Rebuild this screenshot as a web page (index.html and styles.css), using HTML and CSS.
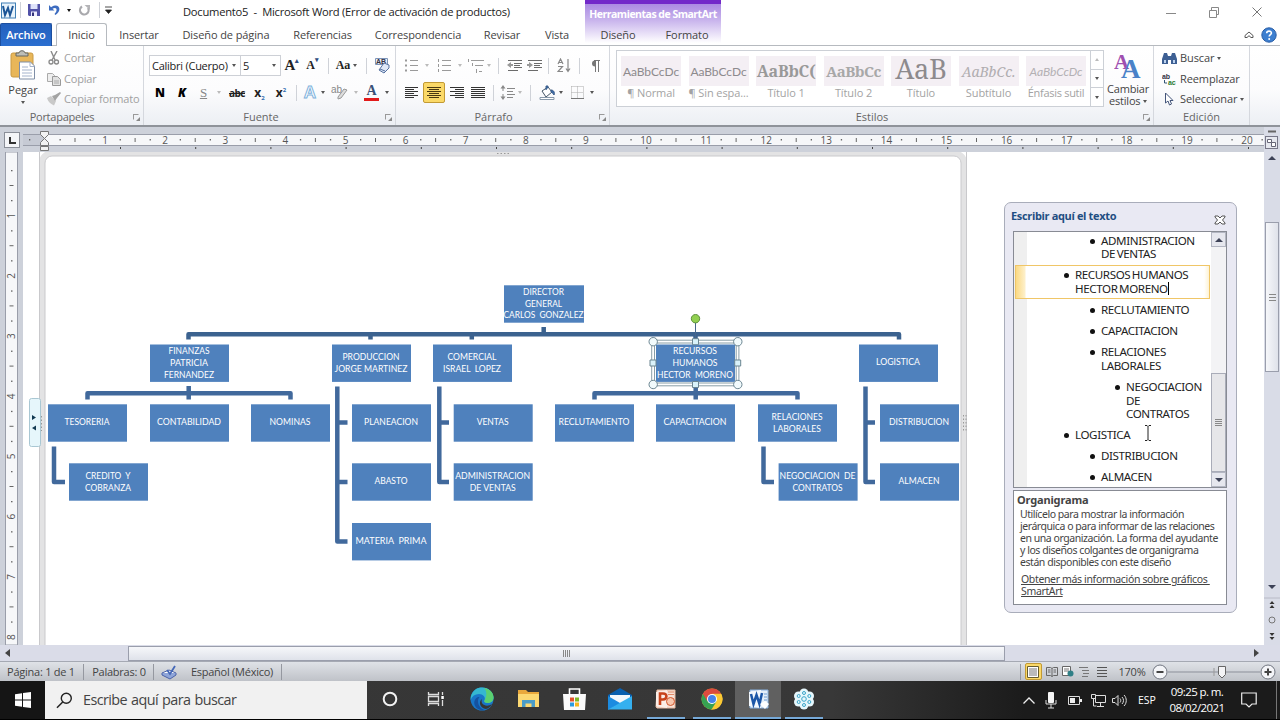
FILE: index.html
```html
<!DOCTYPE html>
<html lang="es">
  <head>
    <meta charset="UTF-8" />
    <meta name="viewport" content="width=device-width, initial-scale=1.0" />
    <title>Documento5 - Microsoft Word</title>
    <link rel="stylesheet" href="styles.css">
  </head>
  <body>
    <header class="titlebar">
      <div class="quick">
        <svg width="17" height="17" viewBox="0 0 17 17"><rect x="1.5" y="1" width="14" height="15" fill="#e8f3fb" stroke="#3f7fb5"/><path d="M3 4l2 9 3-7 2 7 3-9" fill="none" stroke="#1c5596" stroke-width="2"/></svg>
        <i class="sep"></i>
        <svg width="14" height="14" viewBox="0 0 14 14"><path d="M1 1h12v12H2l-1-1z" fill="#5152a8"/><path d="M3.500 1h7v5h-7z" fill="#dfe3fa"/><path d="M4 8.500h6V13H4z" fill="#eef"/><path d="M5 9.500h2V13H5z" fill="#33337a"/></svg>
        <svg width="13" height="12" viewBox="0 0 13 12"><path d="M1 1v5.500h5.500L4.500 4.800C8 2.500 9.500 5 8 8L6.500 10l1 1C13.500 7 12 1 7 1.500c-2 .2-3 1-4 1.800z" fill="#3d6cc0"/></svg>
        <i class="caret"></i>
        <svg width="13" height="13" viewBox="0 0 13 13"><path d="M4 2.500A4.300 4.300 0 1 0 10 4" fill="none" stroke="#a9a9ad" stroke-width="2.200"/><path d="M6.500 1H12v5z" fill="#b5b5b8"/></svg>
        <i class="sep"></i>
        <svg width="7" height="8" viewBox="0 0 7 8"><path d="M0 1h7M.5 4h6L3.500 7.500z" fill="#222" stroke="#222" stroke-width=".8"/></svg>
      </div>
      <div class="caption">Documento5&nbsp; -&nbsp; Microsoft Word (Error de activación de productos)</div>
      <div class="context-title">Herramientas de SmartArt</div>
      <div class="window-buttons">
        <svg width="10" height="12" viewBox="0 0 10 12"><path d="M0 6.500h10" stroke="#888"/></svg>
        <svg width="10" height="11" viewBox="0 0 10 11"><path d="M.5 3.500h7v7h-7zM2.500 3V.5h7v7H8" fill="none" stroke="#888"/></svg>
        <svg width="10" height="10" viewBox="0 0 10 10"><path d="M.5.5l9 9M9.500.5l-9 9" stroke="#777"/></svg>
      </div>
    </header>

    <nav class="tabs">
      <a class="tab file">Archivo</a>
      <a class="tab active">Inicio</a>
      <a class="tab">Insertar</a>
      <a class="tab">Diseño de página</a>
      <a class="tab">Referencias</a>
      <a class="tab">Correspondencia</a>
      <a class="tab">Revisar</a>
      <a class="tab">Vista</a>
      <a class="tab">Diseño</a>
      <a class="tab">Formato</a>
      <div class="help">
        <svg width="10" height="8" viewBox="0 0 10 8"><path d="M1 4.500L5 1l4 3.500v2H7L5 4.700 3 6.500H1z" fill="#fff" stroke="#555"/></svg>
        <svg width="16" height="16" viewBox="0 0 16 16"><circle cx="8" cy="8" r="7.200" fill="#3d7fd0" stroke="#2a5ea6"/><path d="M5.700 6.300c0-3 4.800-2.800 4.700-.2C10.300 7.700 8.200 7.600 8.200 9.600" fill="none" stroke="#fff" stroke-width="1.600"/><circle cx="8.200" cy="12" r="1" fill="#fff"/></svg>
      </div>
    </nav>

    <div class="ribbon">
      <section class="group clipboard">
        <div class="group-body">
          <div class="paste">
            <svg width="26" height="30" viewBox="0 0 26 30"><rect x="1" y="3" width="22" height="24" rx="2" fill="#e8b659" stroke="#c99a45"/><path d="M6 6V3h3c0-3 6-3 6 0h3v3z" fill="#bdbdb6" stroke="#66665f"/><path d="M9.500 12h11l4 4v13h-15z" fill="#fff" stroke="#7f8ea6"/><path d="M20 12v4.500h4.500M12 17h6M12 20h10M12 23h10M12 26h10" fill="none" stroke="#a4b3cc"/></svg>
            <span>Pegar</span>
            <i class="caret"></i>
          </div>
          <ul class="side-list off">
            <li><svg width="16" height="14" viewBox="0 0 16 14"><path d="M5 0l4 9M11 0L6 9" stroke="#8a8a8a" stroke-width="1.400"/><circle cx="5" cy="11" r="2" fill="none" stroke="#888" stroke-width="1.300"/><circle cx="10.500" cy="11" r="2" fill="none" stroke="#888" stroke-width="1.300"/></svg>Cortar</li>
            <li><svg width="16" height="14" viewBox="0 0 16 14"><path d="M1.500 1.500h5l2 2v6h-7z" fill="#eee" stroke="#aaa"/><path d="M6.500 4.500h5l3 3v6h-8z" fill="#e2e2e2" stroke="#999"/><path d="M8 9h5M8 11h5" stroke="#aaa"/></svg>Copiar</li>
            <li><svg width="16" height="14" viewBox="0 0 16 14"><path d="M1 6l4-2 5 5-2 4.500C5 12 2 10 1 6z" fill="#c9c9c9"/><path d="M6 4l3-1 5-3 1 1-4 5-2 3z" fill="#a3a3a3"/></svg>Copiar formato</li>
          </ul>
        </div>
        <footer>Portapapeles<i class="launch"></i></footer>
      </section>

      <section class="group font">
        <div class="group-body stacked">
          <div class="font-row-a">
            <div class="select">Calibri (Cuerpo)<i class="caret"></i></div>
            <div class="select">5<i class="caret"></i></div>
            <span class="glyph serif big">A<sup>▴</sup></span>
            <span class="glyph serif small">A<sup>▾</sup></span>
            <i class="sep"></i>
            <span class="glyph serif">Aa</span><i class="caret"></i>
            <i class="sep"></i>
            <svg width="17" height="17" viewBox="0 0 17 17"><path d="M1.500 1.500h12v6h-12z" fill="#e8eef8" stroke="#7e94b8"/><text x="2" y="7" class="svg-ab">AB</text><path d="M5 13l5-7 5 2v3l-5 5z" fill="#dfe8f7" stroke="#54709f"/><path d="M6 12l5 2" stroke="#54709f"/></svg>
          </div>
          <div class="font-row-b">
            <b class="glyph heavy">N</b>
            <b class="glyph heavy slant">K</b>
            <span class="glyph serif under">S</span><i class="caret pale"></i>
            <span class="glyph strike">abc</span>
            <b class="glyph script">x<sub>2</sub></b>
            <b class="glyph script">x<sup>2</sup></b>
            <i class="sep"></i>
            <span class="glyph outline">A</span><i class="caret"></i>
            <svg width="17" height="16" viewBox="0 0 17 16"><text x="0" y="8" class="svg-hl">ab</text><path d="M7 12l6-8 3 1-6 8-3 1z" fill="#ddd" stroke="#999"/></svg><i class="caret pale"></i>
            <span class="glyph fontcolor">A</span><i class="caret"></i>
          </div>
        </div>
        <footer>Fuente<i class="launch"></i></footer>
      </section>

      <section class="group paragraph">
        <div class="group-body stacked">
          <div class="par-row-a">
            <svg width="14" height="13" viewBox="0 0 14 13"><path d="M0 1.500h2M0 6.500h2M0 11.500h2" stroke="#999" stroke-width="2"/><path d="M5 1.500h8M5 6.500h8M5 11.500h8" stroke="#9a9a9a"/></svg><i class="caret pale"></i>
            <svg width="14" height="13" viewBox="0 0 14 13"><path d="M1.500 0v3M1.500 5v3M1.500 10v3" stroke="#999"/><path d="M5 1.500h9M5 6.500h9M5 11.500h9" stroke="#9a9a9a"/></svg><i class="caret pale"></i>
            <svg width="17" height="14" viewBox="0 0 17 14"><path d="M1.500 0v3M5.500 4v3M9.500 10v4" stroke="#999"/><path d="M4 1.500h13M8 6.500h8M12 12.500h3" stroke="#9a9a9a"/></svg><i class="caret pale"></i>
            <i class="sep"></i>
            <svg width="15" height="13" viewBox="0 0 15 13"><path d="M1 1.500h14M7 4.500h8M7 6.500h6M7 8.500h8M1 11.500h10" stroke="#6b6b6b"/><path d="M0 6l4-3v2h2v2H4v2z" fill="#999"/></svg>
            <svg width="15" height="13" viewBox="0 0 15 13"><path d="M1 1.500h14M7 4.500h8M7 6.500h6M7 8.500h8M1 11.500h10" stroke="#6b6b6b"/><path d="M6 6L2 3v2H0v2h2v2z" fill="#999"/></svg>
            <i class="sep"></i>
            <svg width="14" height="15" viewBox="0 0 14 15"><path d="M1 6l2.500-5L6 6M2 4.500h3M1 8.500h4.500L1 13.500h5M11 1v12M9 10.500l2 3 2-3" fill="none" stroke="#888" stroke-width="1.200"/></svg>
            <i class="sep"></i>
            <svg width="10" height="12" viewBox="0 0 10 12"><path d="M5 .5a3 3 0 0 0 0 6z" fill="#777"/><path d="M4 .5h6M5.500 0v12M8.500 0v12" stroke="#777"/></svg>
          </div>
          <div class="par-row-b">
            <svg width="14" height="12" viewBox="0 0 14 12"><path d="M0 .5h13M0 2.500h9M0 4.500h13M0 6.500h9M0 8.500h13M0 10.500h9" stroke="#333"/></svg>
            <span class="pressed"><svg width="14" height="12" viewBox="0 0 14 12"><path d="M0 .5h14M2 2.500h10M0 4.500h14M2 6.500h10M0 8.500h14M2 10.500h10" stroke="#4b3a10"/></svg></span>
            <svg width="14" height="12" viewBox="0 0 14 12"><path d="M0 .5h14M5 2.500h9M0 4.500h14M5 6.500h9M0 8.500h14M5 10.500h9" stroke="#333"/></svg>
            <svg width="14" height="12" viewBox="0 0 14 12"><path d="M0 .5h14M0 2.500h14M0 4.500h14M0 6.500h14M0 8.500h14M0 10.500h14" stroke="#333"/></svg>
            <i class="sep"></i>
            <svg width="15" height="15" viewBox="0 0 15 15"><path d="M3 0l2.500 3.500h-5zM3 15l2.500-3.500h-5z" fill="#888"/><path d="M3 3v3M3 9v3M7 3.500h8M7 6.500h6M7 9.500h8M7 12.500h6" stroke="#888"/></svg><i class="caret pale"></i>
            <i class="sep"></i>
            <svg width="17" height="15" viewBox="0 0 17 15"><path d="M3 6l6-4 4 5-6 5z" fill="#fff" stroke="#456"/><path d="M7 5V1h2v2M12 5c3 0 4 3 3 5-1-2-2-2-3-3z" fill="#3b6ca8" stroke="#3b5c8a"/><path d="M1 12.500h14v2H1z" fill="#fff" stroke="#89a"/></svg><i class="caret"></i>
            <svg width="13" height="13" viewBox="0 0 13 13"><path d="M.5.500h12v12M.500.500v12M6.500.500v12M.500 6.500h12" fill="none" stroke="#aaa" stroke-dasharray="1 1"/><path d="M0 12.500h13" stroke="#777"/></svg><i class="caret"></i>
          </div>
        </div>
        <footer>Párrafo<i class="launch"></i></footer>
      </section>

      <section class="group styles">
        <div class="group-body">
          <div class="gallery">
            <div class="style"><span class="sample">AaBbCcDc</span>¶ Normal</div>
            <div class="style"><span class="sample">AaBbCcDc</span>¶ Sin espa...</div>
            <div class="style"><span class="sample h1">AaBbC(</span>Título 1</div>
            <div class="style"><span class="sample h2">AaBbCc</span>Título 2</div>
            <div class="style"><span class="sample title">AaB</span>Título</div>
            <div class="style"><span class="sample subtitle">AaBbCc.</span>Subtítulo</div>
            <div class="style"><span class="sample subtle">AaBbCcDc</span>Énfasis sutil</div>
            <div class="gallery-nav">
              <span><i class="caret up pale"></i></span>
              <span><i class="caret"></i></span>
              <span><i class="caret more"></i></span>
            </div>
          </div>
          <div class="change">
            <svg width="28" height="28" viewBox="0 0 28 28"><text x="0" y="18" class="svg-a1">A</text><text x="7" y="27" class="svg-a2">A</text></svg>
            <span>Cambiar<br>estilos <i class="caret"></i></span>
          </div>
        </div>
        <footer>Estilos<i class="launch"></i></footer>
      </section>

      <section class="group editing">
        <div class="group-body">
          <ul class="side-list">
            <li><svg width="15" height="13" viewBox="0 0 15 13"><path d="M2 1h3l1 3h3l1-3h3l2 6v5H9V8H6v4H0V7z" fill="#3d5f93"/><path d="M2 8h2v3H2zM11 8h2v3h-2z" fill="#bcd2ee"/></svg>Buscar <i class="caret"></i></li>
            <li><svg width="15" height="14" viewBox="0 0 15 14"><text x="0" y="7" class="svg-ab">ab</text><text x="6" y="13" class="svg-ab green">ac</text><path d="M2.500 8v3H5" fill="none" stroke="#357"/></svg>Reemplazar</li>
            <li><svg width="15" height="14" viewBox="0 0 15 14"><path d="M3.500 1v10l2.500-2 1.500 4 2-1-1.500-3.500H11z" fill="#fff" stroke="#44557a"/></svg>Seleccionar <i class="caret"></i></li>
          </ul>
        </div>
        <footer>Edición</footer>
      </section>
    </div>

    <main class="editor">
      <div class="sheet">
        <div class="ruler-top">
          <div class="tab-kind"><svg width="7" height="7" viewBox="0 0 7 7"><path d="M1 0v6h6" fill="none" stroke="#333" stroke-width="2"/></svg></div>
          <svg id="hruler" width="1241" height="25" viewBox="23 127 1241 25"></svg>
        </div>
        <div class="workspace">
          <svg id="vruler" width="23" height="493" viewBox="0 152 23 493"></svg>
          <svg id="chart" width="1241" height="493" viewBox="23 152 1241 493">
            <rect x="42" y="153.500" width="922" height="520" rx="9" fill="none" stroke="#e3e3e4" stroke-width="6"/>
            <path d="M39.500 152v493M966.500 152v493" stroke="#c9c9cc"/>
            <rect x="45" y="156" width="916" height="515" rx="7" fill="#fff" stroke="#c9c9cc"/>
            <path d="M497 153.500h13M963.500 415v16M966 415v16M41.500 416v15" stroke="#999" stroke-width="1" stroke-dasharray="1.500 2"/>
            <rect x="29.500" y="398.500" width="11" height="48" rx="2" fill="#e6f6fb" stroke="#a9c7d3"/>
            <path d="M32 415l4 2.500-4 2.500zM36 425.500l-4 2.500 4 2.500z" fill="#123a52"/>
            <g id="links" fill="none" stroke="#41699c" stroke-width="4.500" stroke-linejoin="round">
              <path d="M188.500 339.500V334.200H899V339.500M543.700 327v7M370.500 334v5.500M471.800 334v5.500M695.500 334v8" stroke="#3b628f"/>
              <path d="M87.500 399.500V393.200H290.500V399.500M188.700 386v13.500M594.500 399.500V393.200H797.500V399.500M695.700 386v13.500"/>
              <path d="M337.300 386.500V541.500H347.500M337.300 422.500h10.200M337.300 482h10.200M439.300 386.500V482H449M439.300 422.500H449"/>
              <path d="M865.500 386.500V482H875M865.500 422.500H875M54 446.500V482H65M763.500 446.500V482H774"/>
            </g>
            <g id="nodes"></g>
            <g fill="#f2fbfd" stroke="#6b8591">
              <path d="M653.200 341.600h84.400v43H653.200z" fill="none" stroke="#fff" stroke-width="2.500"/>
              <path d="M651.700 340.200h87.200v45.600h-87.200zM654.500 343h81.700v40h-81.700z" fill="none" stroke-width=".8"/>
              <path d="M695.500 323v18" stroke="#47658a"/>
              <circle cx="695.500" cy="318.700" r="4.200" fill="#92d050" stroke="#5d8f3c"/>
              <circle cx="653.200" cy="341.700" r="4.200"/><circle cx="737.800" cy="341.700" r="4.200"/>
              <circle cx="653.200" cy="384.500" r="4.200"/><circle cx="737.800" cy="384.500" r="4.200"/>
              <path d="M692.500 338.700h6v6h-6zM692.500 381.500h6v6h-6zM650 360h6v6h-6zM734.700 360h6v6h-6z" fill="#d9f2fa"/>
            </g>
          </svg>

          <aside class="pane">
            <h2>Escribir aquí el texto
              <svg width="12" height="10" viewBox="0 0 12 10"><path d="M1 1h3l2 2 2-2h3v1L8.500 5 11 8v1H8L6 7 4 9H1V8l2.500-3L1 2z" fill="#fff" stroke="#555"/></svg>
            </h2>
            <div class="outline-box">
              <ul class="outline-list">
                <li class="l2">ADMINISTRACION<br>DE VENTAS</li>
                <li class="l1 current">RECURSOS HUMANOS<br>HECTOR MORENO<i class="cursor"></i></li>
                <li class="l2">RECLUTAMIENTO</li>
                <li class="l2">CAPACITACION</li>
                <li class="l2">RELACIONES<br>LABORALES</li>
                <li class="l3">NEGOCIACION<br>DE<br>CONTRATOS</li>
                <li class="l1">LOGISTICA</li>
                <li class="l2">DISTRIBUCION</li>
                <li class="l2">ALMACEN</li>
              </ul>
              <div class="pane-scroll">
                <span class="btn"><i class="caret up big"></i></span>
                <span class="thumb"></span>
                <span class="btn"><i class="caret big"></i></span>
              </div>
            </div>
            <div class="about">
              <h3>Organigrama</h3>
              <p>Utilícelo para mostrar la información<br>jerárquica o para informar de las relaciones<br>en una organización. La forma del ayudante<br>y los diseños colgantes de organigrama<br>están disponibles con este diseño</p>
              <a>Obtener más información sobre gráficos&nbsp;<br>SmartArt</a>
            </div>
            <svg class="ibeam" width="8" height="16" viewBox="0 0 8 16"><path d="M1 .5h2l1 1 1-1h2M4 1.500v13M1 15.500h2l1-1 1 1h2" fill="none" stroke="#222"/></svg>
          </aside>
        </div>
      </div>
      <div class="vscroll">
        <svg width="16" height="24" viewBox="0 0 16 24"><path d="M4 4.500h8" stroke="#666" stroke-width="2"/><rect x="1.500" y="9.500" width="12" height="12" fill="#e6e8ef" stroke="#778"/><path d="M3.500 12.500h4v3h-4zM7.500 15.500h4v4h-4z" fill="#fff" stroke="#667"/></svg>
        <i class="caret up big"></i>
        <div class="thumb"></div>
        <i class="caret big"></i>
        <svg width="16" height="48" viewBox="0 0 16 48"><path d="M0 1h16" stroke="#b8bac6"/><path d="M8 4l2.500 3h-5zM8 8l2.500 3h-5zM5.500 36h5L8 39zM5.500 40h5L8 43z" fill="#333"/><circle cx="8" cy="23" r="3" fill="none" stroke="#777"/></svg>
      </div>
    </main>

    <div class="hscroll">
      <i class="arrow left"></i>
      <div class="thumb"></div>
      <i class="arrow right"></i>
    </div>

    <div class="status">
      <span>Página: 1 de 1</span><i class="sep"></i>
      <span>Palabras: 0</span><i class="sep"></i>
      <svg width="18" height="16" viewBox="0 0 18 16"><path d="M2 9l7-3 7 3-6 5z" fill="#fff" stroke="#4a62a8"/><path d="M2 9v2l8 4 6-4V9" fill="#8fa5d8" stroke="#4a62a8"/><path d="M7 6l3 4 5-8" fill="none" stroke="#4467b8" stroke-width="1.800"/></svg>
      <span>Español (México)</span><i class="sep"></i>
      <div class="views">
        <i class="sep"></i>
        <span class="pressed"><svg width="12" height="12" viewBox="0 0 12 12"><path d="M.5.500h11v11H.500z" fill="#fff" stroke="#665c30"/><path d="M2 3h8M2 5h8M2 7h8M2 9h8" stroke="#777"/></svg></span>
        <svg width="12" height="11" viewBox="0 0 12 11"><path d="M.5 1.500h4l1.500 1 1.500-1h4v8h-4L6 10.500l-1.500-1h-4zM6 2.500v8M2 4h2.500M2 6h2.500M7.500 4H10M7.500 6H10" fill="none" stroke="#666"/></svg>
        <svg width="12" height="11" viewBox="0 0 12 11"><path d="M.5.500h8v9h-8z" fill="#fff" stroke="#666"/><path d="M2 3h5M2 5h5" stroke="#777"/><circle cx="8.500" cy="7.500" r="3" fill="#2f7f86"/></svg>
        <svg width="11" height="11" viewBox="0 0 11 11"><path d="M0 1.500h9M3 4.500h7M4 7.500h6M3 10.500h6" stroke="#777"/></svg>
        <svg width="10" height="11" viewBox="0 0 10 11"><path d="M0 1.500h10M0 4.500h10M0 7.500h10M0 10.500h10" stroke="#555"/></svg>
        <span>170%</span>
        <svg width="16" height="16" viewBox="0 0 16 16"><circle cx="8" cy="8" r="7" fill="#f4f5f8" stroke="#707580"/><path d="M4.500 8h7" stroke="#444" stroke-width="2"/></svg>
        <svg width="92" height="16" viewBox="0 0 92 16"><path d="M0 8h92" stroke="#8b8f99"/><path d="M46 4v8" stroke="#999"/><path d="M50.500 2.500h7v8L54 14l-3.500-3.500z" fill="#f4f4f6" stroke="#666"/></svg>
        <svg width="16" height="16" viewBox="0 0 16 16"><circle cx="8" cy="8" r="7" fill="#f4f5f8" stroke="#707580"/><path d="M4.500 8h7M8 4.500v7" stroke="#444" stroke-width="2"/></svg>
      </div>
    </div>

    <div class="taskbar">
      <div class="start"><svg width="16" height="16" viewBox="0 0 16 16"><path d="M0 2.300l7-1v6.300H0zM8 1.100L16 0v7.600H8zM0 8.500h7v6.200l-7-1zM8 8.500h8V16l-8-1.100z" fill="#fff"/></svg></div>
      <div class="search"><svg width="17" height="17" viewBox="0 0 17 17"><circle cx="10.300" cy="6.300" r="5" fill="none" stroke="#222" stroke-width="1.400"/><path d="M6.700 10L1 15.800" stroke="#222" stroke-width="1.500"/></svg>Escribe aquí para buscar</div>
      <div class="apps">
        <span><svg width="16" height="16" viewBox="0 0 16 16"><circle cx="8" cy="8" r="6.300" fill="none" stroke="#f2f2f2" stroke-width="2"/></svg></span>
        <span><svg width="18" height="16" viewBox="0 0 18 16"><path d="M1.500 1v2.500h10V1M1.500 15v-2.500h10V15M1.500 5.500h10v5h-10zM15.500 1v3M15.500 9v6" fill="none" stroke="#ddd" stroke-width="1.300"/><path d="M14.300 5h2.500v3h-2.500z" fill="#fff"/></svg></span>
        <span><svg width="24" height="24" viewBox="0 0 24 24"><circle cx="12" cy="12" r="11.500" fill="#1976c8"/><path d="M1 9C3 3 7 .5 12 .5c7 0 11.500 5 11.500 10 0 4-3 5.500-6 5.500-2 0-4-1-3-2.500C16 10 13 7 9 7 5 7 2 9 .5 13z" fill="#35b8d0"/><path d="M14 1c6 .8 9.500 5 9.500 9.500 0 4-3 5.500-6 5.500-2 0-4-1-3-2.500C17 9 17 4 14 1z" fill="#5bd070"/><path d="M9.500 10C6 14 9 22 15 23c-7 1.500-12-4-10.500-9 1-3 3-4.500 5-4z" fill="#1552a0"/><path d="M12 12c-2 5 4 9 10 5-1.500 3-4 4.500-6 5-6-1-8-7-4-10z" fill="#363636"/></svg></span>
        <span><svg width="21" height="18" viewBox="0 0 21 18"><path d="M0 0h8l2 2h11v15H0z" fill="#e9a83c"/><path d="M0 4h21v13H0z" fill="#fcd872"/><path d="M4 10h13v7h-3.500v-3.500h-6V17H4z" fill="#4a9cc8"/></svg></span>
        <span><svg width="23" height="24" viewBox="0 0 23 24"><path d="M6.500 7V2h10v5" fill="none" stroke="#fff" stroke-width="1.600"/><path d="M0 7h23l-1 16H1z" fill="#fafafa"/><path d="M7 10.500h4v4H7z" fill="#e4532c"/><path d="M12 10.500h4v4h-4z" fill="#80b928"/><path d="M7 15.500h4v4H7z" fill="#2b9be0"/><path d="M12 15.500h4v4h-4z" fill="#f6b71f"/></svg></span>
        <span><svg width="24" height="22" viewBox="0 0 24 22"><path d="M0 7l12-7 12 7v14H0z" fill="#0a5fae"/><path d="M2 7h20v8H2z" fill="#f3f7fb"/><path d="M0 8l12 7-12 7z" fill="#1b8be0"/><path d="M24 8L0 21.500h24z" fill="#35b0ef"/></svg></span>
        <span class="open"><svg width="22" height="21" viewBox="0 0 22 21"><path d="M2 1h18v18H2L1 18z" fill="#f6e2d8" stroke="#e8b9a0"/><path d="M1 3l11-2v18L1 17z" fill="#fbeee7"/><path d="M5 16V4.500h3c5 0 4 6 0 6H5" fill="none" stroke="#c8431b" stroke-width="2.600"/><circle cx="15.500" cy="12.500" r="4" fill="#f8c7ae" stroke="#d1572d"/><path d="M13 3h6M13 5.500h6" stroke="#e38a66"/></svg></span>
        <span class="open"><svg width="22" height="22" viewBox="0 0 22 22"><circle cx="11" cy="11" r="10.500" fill="#e8bb2d"/><path d="M11 11L11 5.800H20.100A10.500 10.500 0 0 1 10 21.500z" fill="#fbc934"/><path d="M11 11L1.900 5.800A10.500 10.500 0 0 0 10.500 21.500L15.500 13.600z" fill="#36a152"/><path d="M1.900 5.800A10.500 10.500 0 0 1 20.100 5.800H11L6.500 13.600z" fill="#dc4b3e"/><circle cx="11" cy="11" r="5" fill="#fff"/><circle cx="11" cy="11" r="4" fill="#4683ea"/></svg></span>
        <span class="open front"><svg width="21" height="21" viewBox="0 0 21 21"><path d="M2 1h18v18H2z" fill="#e4effa" stroke="#86aedb"/><path d="M1 3l12-2v18L1 17z" fill="#f3f8fd"/><path d="M3 5l2.500 10L8.500 6l3 9L14 4" fill="none" stroke="#1c57a8" stroke-width="2.500"/><path d="M16 5h3M16 8h3M16 11h3" stroke="#6b9bd2"/><path d="M12 15l5-3 4 3-4 5z" fill="#fff"/></svg></span>
        <span class="open"><svg width="22" height="22" viewBox="0 0 22 22"><g fill="#e7f7fc"><circle cx="11" cy="11" r="6"/><circle cx="11" cy="5" r="4.500"/><circle cx="16.500" cy="8" r="4.500"/><circle cx="16.500" cy="14" r="4.500"/><circle cx="11" cy="17" r="4.500"/><circle cx="5.500" cy="14" r="4.500"/><circle cx="5.500" cy="8" r="4.500"/></g><g fill="none" stroke="#3aa5c9"><circle cx="11" cy="11" r="2.300"/><circle cx="11" cy="5" r="1.500"/><circle cx="16.300" cy="8" r="1.500"/><circle cx="16.300" cy="14" r="1.500"/><circle cx="11" cy="17" r="1.500"/><circle cx="5.700" cy="14" r="1.500"/><circle cx="5.700" cy="8" r="1.500"/></g></svg></span>
      </div>
      <div class="tray">
        <svg width="12" height="7" viewBox="0 0 12 7"><path d="M.5 6.500L6 1l5.500 5.500" fill="none" stroke="#eee" stroke-width="1.300"/></svg>
        <svg width="12" height="17" viewBox="0 0 12 17"><rect x="3" y="0" width="6" height="11" rx="1" fill="#f5f5f5"/><path d="M1 8v4h10V8M6 12v4M3 16h6" fill="none" stroke="#ddd"/></svg>
        <svg width="14" height="9" viewBox="0 0 14 9"><path d="M.5.500h11v8H.500z" fill="none" stroke="#ddd"/><path d="M2 2h5v5H2zM12 3h2v3h-2z" fill="#eee"/></svg>
        <svg width="15" height="13" viewBox="0 0 15 13"><path d="M4.500 1.500h10v7h-10zM9.500 9v3M6 12.500h7M.500.500h4v4h-4zM2.500 5v7h3" fill="none" stroke="#ddd"/></svg>
        <svg width="15" height="13" viewBox="0 0 15 13"><path d="M.5 4.500h2.500L6 1.500v10L3 8.500H.5zM8 4.500c1 1 1 3 0 4M10 3c2 2 2 5 0 7M12 1c3 3 3 8 0 11" fill="none" stroke="#ddd"/></svg>
        <span class="lang">ESP</span>
        <span class="clock">09:25 p. m.<br>08/02/2021</span>
        <svg width="16" height="16" viewBox="0 0 16 16"><path d="M.7 1h14.500v11H11l-3 3-3-3H.7z" fill="none" stroke="#eee" stroke-width="1.200"/></svg>
      </div>
    </div>
    <script src="script.js"></script>
  </body>
</html>
```
FILE: styles.css
```css
* {
  box-sizing: border-box;
  margin: 0;
  padding: 0;
}

body {
  width: 1280px;
  height: 720px;
  overflow: hidden;
  display: flex;
  flex-direction: column;
  background: #fff;
  color: #444;
  font: 11px/14px "Open Sans", "Noto Sans", sans-serif;
}

svg {
  display: block;
  flex: none;
}

ul {
  list-style: none;
}

.sep {
  width: 1px;
  height: 16px;
  background: #cfd2d8;
}

.caret {
  display: inline-block;
  flex: none;
  border: 2.5px solid transparent;
  border-top: 3px solid #555;
  border-bottom: 0;
}
.caret.pale {
  border-top-color: #bbb;
}
.caret.up {
  border-top: 0;
  border-bottom: 3px solid #555;
}
.caret.up.pale {
  border-bottom-color: #bbb;
}
.caret.big {
  border-width: 4px 4px 0;
  border-top-color: #3d4257;
}
.caret.up.big {
  border-width: 0 4px 4px;
  border-bottom-color: #3d4257;
}

/* title bar */
.titlebar {
  position: relative;
  flex: none;
  height: 23px;
}
.quick {
  display: grid;
  grid-template-columns: 17px 7px 19px 22px 8px 23px 7px 10px;
  align-items: center;
  justify-items: center;
  height: 20px;
}
.quick .caret {
  border-top-color: #111;
}
.caption {
  position: absolute;
  left: 183px;
  top: 5px;
  color: #222;
  font-size: 11.2px;
  white-space: nowrap;
  letter-spacing: -0.25px;
}
.context-title {
  position: absolute;
  left: 585px;
  top: 0;
  width: 136px;
  height: 43px;
  padding-top: 3px;
  border-top: 4px solid #7229c9;
  background: linear-gradient(#ab8be2, #c7b2ec 40%, #fff);
  color: #fff;
  font-weight: bold;
  font-size: 10.5px;
  text-align: center;
  letter-spacing: -0.5px;
  white-space: nowrap;
}
.window-buttons {
  position: absolute;
  right: 18px;
  top: 7px;
  display: flex;
  gap: 33px;
}

/* tabs */
.tabs {
  position: relative;
  flex: none;
  display: grid;
  grid-template-columns: 52px 59px 56px 118px 75px 116px 52px 58px 64px 74px 1fr;
  height: 23px;
  border-bottom: 1px solid #b6babf;
}
.tab {
  padding-top: 5px;
  text-align: center;
  white-space: nowrap;
  letter-spacing: -0.1px;
}
.tab.file {
  background: linear-gradient(#2360bd, #2b6fd0);
  border: 1px solid #1d4f9f;
  border-bottom: 0;
  border-radius: 2px 2px 0 0;
  color: #fff;
  font-weight: 600;
  padding-top: 4px;
}
.tab.active {
  width: 51px;
  height: 23px;
  margin-left: 4px;
  background: #fff;
  border: 1px solid #b6babf;
  border-bottom: 0;
  border-radius: 3px 3px 0 0;
  padding-top: 4px;
}
.help {
  display: flex;
  justify-content: flex-end;
  align-items: center;
  gap: 7px;
  padding-right: 3px;
}

/* ribbon */
.ribbon {
  flex: none;
  display: flex;
  height: 81px;
  background: linear-gradient(#fff 0%, #fcfcfd 55%, #eceff4 100%);
  border-bottom: 2px solid #8f939a;
}
.group {
  display: flex;
  flex-direction: column;
  flex: none;
  border-right: 1px solid #d5d8de;
}
.group-body {
  flex: 1;
  display: flex;
}
.group footer {
  position: relative;
  height: 15px;
  text-align: center;
  color: #666;
  padding-right: 19px;
}
.launch {
  position: absolute;
  right: 4px;
  top: 4px;
  width: 6px;
  height: 6px;
  border: 1px solid #999;
  border-right-color: transparent;
  border-bottom-color: transparent;
}
.launch::after {
  content: "";
  position: absolute;
  left: 2px;
  top: 2px;
  border: 2px solid #888;
  border-left-color: transparent;
  border-top-color: transparent;
}
.clipboard { width: 144px; }
.clipboard footer { letter-spacing: -0.25px; }
.font { width: 252px; }
.font footer { padding-right: 17px; }
.paragraph { width: 214px; }
.paragraph footer { padding-right: 18px; }
.styles { width: 544px; }
.editing { width: 96px; }
.group.editing footer { padding-right: 0; }

.paste {
  width: 46px;
  padding-top: 4px;
  display: flex;
  flex-direction: column;
  align-items: center;
  color: #444;
}
.paste span {
  margin: 3px 0 4px;
}
.side-list {
  padding-top: 2px;
  color: #444;
  letter-spacing: -0.1px;
}
.side-list li {
  display: flex;
  align-items: center;
  gap: 3px;
  height: 20.5px;
  white-space: nowrap;
}
.off {
  color: #a0a0a0;
}
.clipboard .side-list {
  letter-spacing: -0.2px;
}
.clipboard .side-list svg {
  margin-right: -1px;
}
.editing .side-list {
  padding-left: 8px;
}

.stacked {
  flex-direction: column;
}
.font-row-a,
.font-row-b,
.par-row-a,
.par-row-b {
  display: grid;
  align-items: center;
  justify-items: center;
  height: 27px;
}
.font-row-a {
  grid-template-columns: 92px 40px 22px 19px 12px 18px 6px 16px 16px;
  padding-left: 5px;
  margin-top: 6px;
}
.font-row-b {
  grid-template-columns: 22px 22px 21px 10px 26px 19px 24px 7px 20px 6px 26px 8px 23px 7px;
  padding-left: 5px;
}
.par-row-a {
  grid-template-columns: 16px 14px 20px 11px 21px 5px 14px 18px 22px 7px 24px 7px 24px;
  padding-left: 8px;
  margin-top: 6px;
}
.par-row-b {
  grid-template-columns: 16px 27px 19px 23px 8px 20px 5px 17px 16px 12px 21px 8px;
  padding-left: 8px;
}
.select {
  display: flex;
  align-items: center;
  justify-content: space-between;
  width: 100%;
  height: 21px;
  padding: 0 4px 0 2px;
  border: 1px solid #cdd0d6;
  background: #fff;
  color: #222;
  white-space: nowrap;
  letter-spacing: -0.25px;
}
.select + .select {
  border-left: 0;
}
.glyph {
  position: relative;
  color: #222;
  white-space: nowrap;
}
.serif {
  font: bold 12px "Liberation Serif", serif;
}
.serif.big { font-size: 15px; }
.serif.small { font-size: 12px; }
.serif sup { font-size: 7px; vertical-align: 7px; line-height: 0; color: #2f4d80; }
.heavy { font-weight: 800; font-size: 12px; color: #000; }
.slant { font-style: italic; }
.serif.under { color: #888; font-weight: normal; font-size: 13px; text-decoration: underline; }
.strike { font-weight: 700; font-size: 10px; letter-spacing: -0.5px; text-decoration: line-through; }
.script { font-size: 12px; line-height: 12px; }
.script sub, .script sup { font-size: 6px; line-height: 0; color: #2f6db0; }
.outline {
  font: bold 17px "Liberation Sans", sans-serif;
  color: #fff;
  -webkit-text-stroke: 1px #7fb2dc;
}
.fontcolor {
  width: 15px;
  height: 17px;
  border-bottom: 3px solid #e21a1a;
  font: bold 14px/14px "Liberation Serif", serif;
  color: #3b5177;
  text-align: center;
}
.svg-ab { font: bold 7px "Liberation Sans", sans-serif; fill: #334; }
.svg-ab.green { fill: #2b7a33; }
.svg-hl { font: 10px "Liberation Sans", sans-serif; fill: #888; }
.svg-a1 { font: bold 21px "Liberation Serif", serif; fill: #a04fb0; }
.svg-a2 { font: bold 27px "Liberation Serif", serif; fill: #4a82c8; }
.pressed {
  display: flex;
  align-items: center;
  justify-content: center;
  width: 22px;
  height: 21px;
  background: #fbd968;
  border: 1px solid #c29a35;
  border-radius: 2px;
}

.gallery {
  display: flex;
  flex: none;
  width: 488px;
  height: 57px;
  margin: 4px 0 0 6px;
  padding-left: 4px;
  border: 1px solid #ccd0d6;
  background: #fff;
}
.style {
  width: 60px;
  margin-right: 7.5px;
  padding-top: 5px;
  flex: none;
  color: #a3a3a3;
  text-align: center;
  white-space: nowrap;
  letter-spacing: -0.1px;
}
.style:nth-child(7) {
  margin-right: 0;
  letter-spacing: -0.3px;
}
.sample {
  display: block;
  height: 30px;
  overflow: hidden;
  background: #f4eff4;
  color: #8d8a8d;
  font: 12px/31px Lato, sans-serif;
  letter-spacing: -0.05px;
}
.sample.h1 { font: bold 16px/31px "Noto Serif", "Liberation Serif", serif; color: #999; letter-spacing: -0.2px; }
.sample.h2 { font: bold 15px/31px "Noto Serif", "Liberation Serif", serif; color: #a8a8a8; letter-spacing: -0.5px; }
.sample.title { font: 27px/25px "Noto Serif", "Liberation Serif", serif; }
.sample.subtitle { font: italic 14px/31px "Noto Serif", "Liberation Serif", serif; color: #b0adb0; }
.sample.subtle { font-style: italic; color: #b3b0b3; }
.gallery-nav {
  display: flex;
  flex-direction: column;
  width: 13px;
  margin-left: auto;
  border-left: 1px solid #ccd0d6;
}
.gallery-nav span {
  flex: 1;
  display: flex;
  align-items: center;
  justify-content: center;
  border-bottom: 1px solid #ccd0d6;
}
.gallery-nav span:last-child { border: 0; }
.more { box-shadow: 0 -4px 0 -3px #555; }
.change {
  display: flex;
  flex-direction: column;
  align-items: center;
  width: 48px;
  padding-top: 5px;
  text-align: center;
  line-height: 12px;
  letter-spacing: -0.2px;
  white-space: nowrap;
}
.change span {
  margin-top: 4px;
}
.change .caret {
  vertical-align: 2px;
}

/* document */
.editor {
  flex: none;
  display: flex;
  height: 518px;
}
.sheet {
  width: 1264px;
}
.ruler-top {
  display: flex;
  height: 25px;
  background: #cdd1da;
}
.tab-kind {
  display: flex;
  align-items: center;
  justify-content: center;
  width: 16px;
  height: 16px;
  margin: 5px 3px 0 4px;
  background: #f4f5f8;
  border: 1px solid #8a8e98;
}
.workspace {
  position: relative;
  display: flex;
}
.ruler-text {
  font: 10px "Open Sans", sans-serif;
  fill: #555;
  text-anchor: middle;
}
.node-text {
  font: 9.4px Lato, sans-serif;
  fill: #fff;
  text-anchor: middle;
  white-space: pre;
}
.vscroll {
  width: 16px;
  display: flex;
  flex-direction: column;
  align-items: center;
  background: #d9dce7;
}
.vscroll .caret { margin-bottom: 8px; }
.vscroll .caret.up { margin: 5px 0 62px; }
.vscroll .thumb {
  flex: none;
  width: 14px;
  height: 150px;
  margin-bottom: 213px;
  border: 1px solid #9a9eac;
  background: repeating-linear-gradient(#888 0 1px, transparent 1px 3px) center / 7px 7px no-repeat,
    linear-gradient(90deg, #f6f7fa, #dfe2ea);
}

/* SmartArt text pane */
.pane {
  position: absolute;
  left: 1004px;
  top: 50px;
  width: 233px;
  height: 411px;
  padding: 0 9px 0 8px;
  background: #e9e9f3;
  border: 1px solid #a9adba;
  border-radius: 7px;
}
.pane h2 {
  display: flex;
  justify-content: space-between;
  height: 28px;
  margin-left: -2px;
  padding-top: 6px;
  font-size: 11px;
  line-height: 14px;
  color: #1f4e82;
  letter-spacing: -0.35px;
}
.pane h2 svg {
  margin-top: 6px;
  margin-right: 1px;
}
.outline-box {
  display: flex;
  height: 257px;
  border: 1px solid #888b94;
  background: linear-gradient(90deg, #efefef 13px, #fff 13px);
  overflow: hidden;
}
.outline-list {
  flex: none;
  width: 197px;
  color: #222;
  font: 11.6px/13.8px "Noto Sans", sans-serif;
  letter-spacing: -0.4px;
  word-spacing: -1px;
}
.outline-list li {
  position: relative;
  padding: 3.6px 0;
  white-space: nowrap;
}
.outline-list li:first-child {
  padding-top: 1.5px;
}
.outline-list li::before {
  content: "";
  position: absolute;
  width: 5px;
  height: 5px;
  margin: 5px 0 0 -11px;
  border-radius: 50%;
  background: #111;
}
.outline-list .l1 { padding-left: 61px; }
.outline-list .l2 { padding-left: 87px; }
.outline-list .l3 { padding-left: 112px; }
.outline-list .current {
  margin: 0 1px;
  padding-left: 60px;
  background: linear-gradient(90deg, #fbd77c, #fdf0cb 10px, #fff 11px, #fff 97%, #fdf0cb);
  box-shadow: inset 0 0 0 1px #f0c667;
}
.cursor {
  display: inline-block;
  width: 1px;
  height: 13px;
  background: #000;
  vertical-align: -2px;
}
.pane-scroll {
  display: flex;
  flex-direction: column;
  flex: 1;
  background: #f3f3f5;
}
.pane-scroll .btn {
  display: flex;
  align-items: center;
  justify-content: center;
  height: 15px;
  background: #e6e7ee;
  border: 1px solid #b3b6c2;
}
.pane-scroll .thumb {
  height: 99px;
  margin-top: auto;
  border: 1px solid #a9acb8;
  background: repeating-linear-gradient(#888 0 1px, transparent 1px 2px) center / 7px 7px no-repeat, #e6e6e9;
}
.about {
  height: 115px;
  margin-top: 2px;
  padding: 2px 3px 0;
  border: 1px solid #888b94;
  background: #fff;
  font: 10.5px/12px "Noto Sans", sans-serif;
  letter-spacing: -0.45px;
  white-space: nowrap;
}
.about h3 {
  font-size: 11px;
  line-height: 13px;
  letter-spacing: -0.15px;
}
.about p {
  margin: 2px 0 5px 3px;
}
.about a {
  display: block;
  margin-left: 4px;
  letter-spacing: -0.35px;
  text-decoration: underline;
}
.ibeam {
  position: absolute;
  left: 139px;
  top: 222px;
}

.hscroll {
  flex: none;
  display: flex;
  align-items: center;
  justify-content: space-between;
  height: 16px;
  padding: 0 21px 0 5px;
  background: #dadce8;
}
.hscroll .thumb {
  width: 877px;
  height: 15px;
  margin-right: 132px;
  border: 1px solid #9a9eac;
  background: repeating-linear-gradient(90deg, #888 0 1px, transparent 1px 2px) center / 7px 7px no-repeat,
    linear-gradient(#f6f7fa, #dfe2ea);
}
.arrow {
  border: 4px solid transparent;
  border-left-width: 0;
  border-right: 5px solid #444;
}
.arrow.right {
  border-right: 0;
  border-left: 5px solid #444;
}

/* status bar */
.status {
  flex: none;
  display: grid;
  grid-template-columns: 66px 18px 54px 14px 30px 84px 14px 1fr;
  align-items: center;
  justify-items: center;
  height: 20px;
  padding-left: 8px;
  border-top: 1px solid #a5a9b3;
  background: linear-gradient(#dfe2e7, #bfc2c8);
  letter-spacing: -0.25px;
  white-space: nowrap;
}
.status > svg {
  justify-self: start;
}
.status .sep {
  background: #9598a0;
}
.status .views {
  justify-self: end;
  display: grid;
  grid-template-columns: 4px 22px 15px 17px 16px 20px 40px 16px 92px 16px;
  align-items: center;
  justify-items: center;
  margin-right: 4px;
}
.views .pressed {
  width: 17px;
  height: 17px;
}

/* taskbar */
.taskbar {
  flex: 1;
  display: flex;
  background: linear-gradient(90deg, #353535 0, #383838 65%, #1b1b1b 80%);
  border-bottom: 1px solid #000;
}
.start {
  display: flex;
  align-items: center;
  justify-content: center;
  width: 45px;
  background: #151515;
}
.search {
  display: flex;
  align-items: center;
  gap: 10px;
  width: 322px;
  padding-left: 11px;
  background: #f1f1f1;
  color: #444;
  font-size: 14.4px;
  letter-spacing: -0.6px;
  word-spacing: 1px;
}
.apps {
  display: flex;
}
.apps span {
  display: flex;
  align-items: center;
  justify-content: center;
  width: 46px;
  border: solid transparent;
  border-width: 0 0 2px;
}
.apps .open {
  background: linear-gradient(#76a9d8, #76a9d8) center bottom / 38px 2px no-repeat border-box;
}
.apps .front {
  background: linear-gradient(#76a9d8, #76a9d8) bottom / 100% 2px no-repeat border-box, #606060;
}
.tray {
  display: grid;
  grid-template-columns: 22px 22px 26px 20px 22px 34px 66px 38px;
  align-items: center;
  justify-items: center;
  margin-left: auto;
  padding-right: 8px;
  margin-right: 3px;
  border-right: 1px solid #777;
  color: #fff;
  line-height: 16px;
  text-align: center;
  white-space: nowrap;
}
.lang {
  font-size: 10.5px;
}
.clock {
  font-size: 11.5px;
  letter-spacing: -0.6px;
}
```
FILE: script.js
```js
const SVG = "http://www.w3.org/2000/svg";

function add(parent, tag, attrs, text) {
  const el = document.createElementNS(SVG, tag);
  for (const key in attrs) el.setAttribute(key, attrs[key]);
  if (text) el.textContent = text;
  parent.appendChild(el);
  return el;
}

// horizontal ruler: one number per centimetre, dots on the quarters
const h = document.getElementById("hruler");
add(h, "rect", { x: 23, y: 134, width: 1241, height: 11.5, fill: "#c6cad4" });
add(h, "rect", { x: 45, y: 134, width: 1219, height: 11.5, fill: "#f6f7f9" });
add(h, "path", { d: "M23 134.5H1264M23 145.500H1264", stroke: "#9a9eaa" });
for (let i = 0; i < 21; i++) {
  const x = 45 + i * 60.1;
  if (i) add(h, "text", { x: x, y: 143.5, class: "ruler-text" }, String(i));
  add(h, "rect", { x: x + 14.5, y: 139, width: 1.3, height: 1.5, fill: "#666" });
  if (i < 20) {
    add(h, "rect", { x: x + 29.5, y: 138, width: 1, height: 4, fill: "#666" });
    add(h, "rect", { x: x + 44.5, y: 139, width: 1.3, height: 1.5, fill: "#666" });
  }
}
add(h, "rect", { x: 29, y: 139, width: 1.3, height: 1.5, fill: "#666" });
for (let x = 120; x < 1264; x += 75.2) {
  add(h, "rect", { x: x, y: 147, width: 1, height: 2, fill: "#444" });
}
add(h, "path", { d: "M40.500 131.500h8v3l-4 4-4-4zM44.500 138.500l4 4v3h-8v-3zM40.500 146.500h8v4h-8z", fill: "#f2f2f2", stroke: "#777" });

// vertical ruler
const v = document.getElementById("vruler");
add(v, "rect", { x: 0, y: 152, width: 23, height: 493, fill: "#cdd1da" });
add(v, "rect", { x: 5.5, y: 152, width: 12, height: 493, fill: "#f6f7f9", stroke: "#9a9eaa" });
for (let i = 0; i < 9; i++) {
  const y = 155.5 + i * 60.2;
  if (i) add(v, "text", { x: 0, y: 0, transform: `translate(15 ${y}) rotate(-90)`, class: "ruler-text" }, String(i));
  add(v, "rect", { x: 11, y: y + 14.5, width: 1.5, height: 1.3, fill: "#666" });
  add(v, "rect", { x: 9.5, y: y + 29.5, width: 4, height: 1, fill: "#666" });
  add(v, "rect", { x: 11, y: y + 44.5, width: 1.5, height: 1.3, fill: "#666" });
}

// org chart boxes: x, y, then pairs of line text and line width
const nodes = [
  [504, 285.3, "DIRECTOR", 41, "GENERAL", 37, "CARLOS  GONZALEZ", 80],
  [150, 344.5, "FINANZAS", 41, "PATRICIA", 38, "FERNANDEZ", 50],
  [332, 344.5, "PRODUCCION", 57, "JORGE MARTINEZ", 73],
  [433, 344.5, "COMERCIAL", 49, "ISRAEL  LOPEZ", 58],
  [656, 344.5, "RECURSOS", 44, "HUMANOS", 45, "HECTOR  MORENO", 76],
  [859, 344.5, "LOGISTICA", 44],
  [48, 404.3, "TESORERIA", 45],
  [150, 404.3, "CONTABILIDAD", 64],
  [251, 404.3, "NOMINAS", 41],
  [352, 404.3, "PLANEACION", 54],
  [453.7, 404.3, "VENTAS", 32],
  [555, 404.3, "RECLUTAMIENTO", 71],
  [656, 404.3, "CAPACITACION", 63],
  [758, 404.3, "RELACIONES", 51, "LABORALES", 48],
  [880, 404.3, "DISTRIBUCION", 60],
  [69, 463.3, "CREDITO  Y", 45, "COBRANZA", 46],
  [352, 463.3, "ABASTO", 33],
  [453.7, 463.3, "ADMINISTRACION", 75, "DE VENTAS", 46],
  [778.6, 463.3, "NEGOCIACION  DE", 76, "CONTRATOS", 50],
  [880, 463.3, "ALMACEN", 41],
  [352, 523, "MATERIA  PRIMA", 71]
];
const baselines = { 1: [20.8], 2: [15.3, 27.3], 3: [9.8, 21.6, 33.1] };
const group = document.getElementById("nodes");

nodes.forEach(function (node) {
  const x = node[0], y = node[1], lines = node.slice(2);
  const width = y < 300 ? 80 : 79;
  add(group, "rect", { x: x, y: y, width: width, height: 37.4, fill: "#4f81bd" });
  baselines[lines.length / 2].forEach(function (dy, i) {
    add(group, "text", {
      x: x + width / 2 - 0.5,
      y: y + dy,
      textLength: lines[i * 2 + 1],
      lengthAdjust: "spacingAndGlyphs",
      class: "node-text"
    }, lines[i * 2]);
  });
});
```
